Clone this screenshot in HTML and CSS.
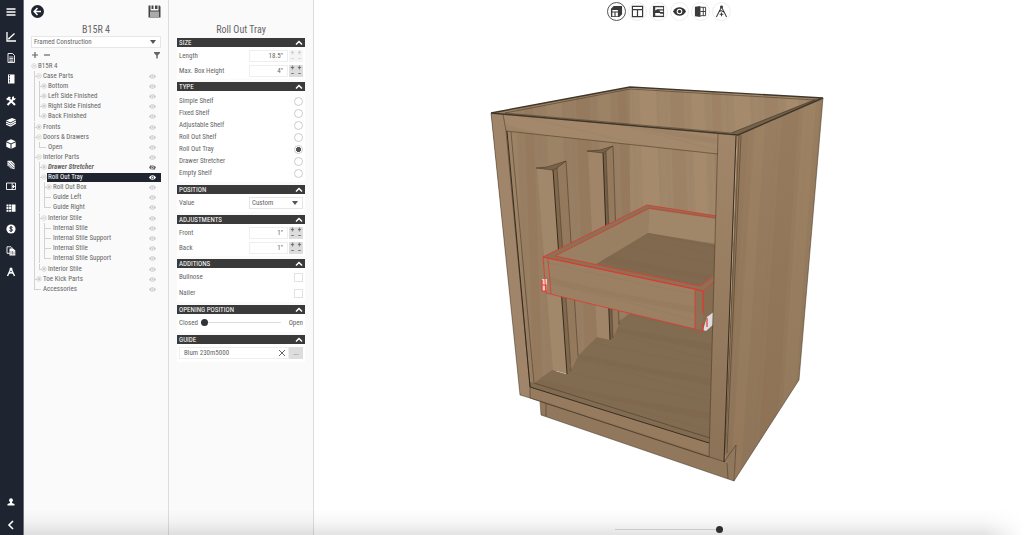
FILE: index.html
```html
<!DOCTYPE html>
<html lang="en">

<head>
  <meta charset="utf-8">
  <link rel="stylesheet" href="styles.css">
  <title>B15R 4 - Roll Out Tray</title>
</head>
<body>
  <!-- shared icons -->
  <svg class="defs" width="0" height="0" aria-hidden="true">
    <symbol id="eye" viewBox="0 0 16 10"><path fill="currentColor" fill-rule="evenodd" d="M8 0C4 0 1.300 2.500 0 5c1.300 2.500 4 5 8 5s6.700-2.500 8-5c-1.300-2.500-4-5-8-5zm0 1.500a3.500 3.500 0 1 1 0 7 3.500 3.500 0 0 1 0-7z"/><circle cx="8" cy="5" r="2.200" fill="currentColor"/></symbol>
    <symbol id="eye-off" viewBox="0 0 16 10"><use href="#eye"/><path d="M2 0l12 10" stroke="currentColor" stroke-width="1.800"/></symbol>
    <symbol id="plus" viewBox="0 0 7 7"><circle cx="3.500" cy="3.500" r="2.700" fill="#fafafa" stroke="#ccc" stroke-width=".8"/><path d="M2 3.500h3M3.500 2v3" stroke="#aaa" stroke-width=".8"/></symbol>
    <symbol id="minus" viewBox="0 0 7 7"><circle cx="3.500" cy="3.500" r="2.700" fill="#fafafa" stroke="#ccc" stroke-width=".8"/><path d="M2 3.500h3" stroke="#aaa" stroke-width=".8"/></symbol>
    <symbol id="up" viewBox="0 0 8 6"><path d="M1 4.500l3-3 3 3" fill="none" stroke="#fff" stroke-width="1.500"/></symbol>
  </svg>

  <div class="app">
    <nav class="sidebar">
      <button class="nav-button menu" aria-label="Menu"><svg viewBox="0 0 10 10"><path d="M.5 2h9M.5 5h9M.5 8h9" stroke="currentColor" stroke-width="1.300"/></svg></button>
      <div class="nav-list">
        <button class="nav-button" aria-label="Chart"><svg viewBox="0 0 10 10"><path d="M1 0v9h9M2.500 7L8.500 1.500" fill="none" stroke="currentColor" stroke-width="1.300"/><path d="M2.200 7.500l.6-2 1.400 1.400z" fill="currentColor"/></svg></button>
        <button class="nav-button" aria-label="Document"><svg viewBox="0 0 10 10"><path d="M2 .5h4.500L8.500 2.500v7H2z" fill="none" stroke="currentColor" stroke-width=".9"/><path d="M3.300 4h4M3.300 5.500h4M3.300 7h4M3.300 8.300h4" stroke="currentColor" stroke-width=".8"/></svg></button>
        <button class="nav-button" aria-label="Catalog"><svg viewBox="0 0 10 10"><path d="M2 .5h6.500v9H2z" fill="currentColor"/><path d="M3.500 1v8" stroke="#1f2530" stroke-dasharray="1 .6"/></svg></button>
        <button class="nav-button" aria-label="Tools"><svg viewBox="0 0 10 10"><path d="M1.500 9L8 2.500M2 2l7 7" stroke="currentColor" stroke-width="2"/><path d="M0 3l3-2.500 2 1-3 3zM6 1l2-.8v2l2 .1-1.500 2L6 3.500z" fill="currentColor"/></svg></button>
        <button class="nav-button" aria-label="Materials"><svg viewBox="0 0 10 10"><path d="M0 3.500l6-2.500 4 1.500-5.500 3z" fill="currentColor"/><path d="M0 5l4.500 2L10 4M0 7l4.500 2L10 6" fill="none" stroke="currentColor" stroke-width="1.200"/></svg></button>
        <button class="nav-button" aria-label="Products"><svg viewBox="0 0 10 10"><path d="M5 .3l4.700 2L5 4.500.3 2.300zM.3 3.200l4.200 2v4.500l-4.200-2zM9.700 3.200l-4.200 2v4.500l4.200-2z" fill="currentColor"/></svg></button>
        <button class="nav-button" aria-label="Parts"><svg viewBox="0 0 10 10"><path d="M1.500 .8h4l3 3v5.500l-4-1-3-3z" fill="currentColor"/><path d="M2 2.200l6 6M2 4.500l4 4M4.500 1.800l4 4" stroke="#1f2530" stroke-width=".7"/></svg></button>
        <button class="nav-button" aria-label="Layout"><svg viewBox="0 0 10 10"><path d="M.5 2h9v6.500h-9zM6.200 2v6.500M6.200 5.500h3" fill="none" stroke="currentColor" stroke-width=".9"/><path d="M7.500 4v3" stroke="currentColor"/></svg></button>
        <button class="nav-button" aria-label="Grid"><svg viewBox="0 0 10 10"><path d="M.5 1.500h2v2h-2zm2.600 0h2v2h-2zM.5 4.100h2v2h-2zm2.600 0h2v2h-2zM.5 6.700h2v2h-2zm2.600 0h2v2h-2zM5.700 1.500h3.800v7.200H5.700z" fill="currentColor"/></svg></button>
        <button class="nav-button" aria-label="Pricing"><svg viewBox="0 0 10 10"><circle cx="5" cy="5" r="4.600" fill="currentColor"/><path d="M6.600 3.500C5.500 2.500 3.500 3 3.700 4.100c.2 1 2.700.7 2.800 1.900 0 1.200-2 1.500-3.100.5M5 2v6" fill="none" stroke="#1f2530"/></svg></button>
        <button class="nav-button" aria-label="Reports"><svg viewBox="0 0 10 10"><path d="M1 .8h4l1 1v5.500H1z" fill="none" stroke="currentColor" stroke-width=".9"/><path d="M3.500 2.500H7l2.300 2v5H3.500z" fill="currentColor"/><path d="M5 5v3.500M6.500 5v3.500M8 5.500v3" stroke="#1f2530" stroke-width=".5"/></svg></button>
        <button class="nav-button" aria-label="Drafting"><svg viewBox="0 0 10 10"><path d="M5 1.500L1.500 9M5 1.500L8.500 9M2.500 6.500Q5 5 7.500 6.500" fill="none" stroke="currentColor" stroke-width="1.400"/><circle cx="5" cy="2" r="1.500" fill="currentColor"/></svg></button>
      </div>
      <div class="nav-bottom">
        <button class="nav-button" aria-label="Account"><svg viewBox="0 0 10 10"><circle cx="5" cy="3.200" r="1.900" fill="currentColor"/><path d="M4 4h2v2l2.500 1v1.500h-7V7L4 6z" fill="currentColor"/></svg></button>
        <button class="nav-button" aria-label="Collapse"><svg viewBox="0 0 10 10"><path d="M7 1L3 5l4 4" fill="none" stroke="currentColor" stroke-width="1.600"/></svg></button>
      </div>
    </nav>

    <section class="panel tree-panel">
      <div class="panel-bar">
        <button class="back" aria-label="Back"><svg viewBox="0 0 13 13"><circle cx="6.500" cy="6.500" r="6.500" fill="#1f2530"/><path d="M6.500 3L3.200 6.500l3.300 3.500M3.500 6.500H10" fill="none" stroke="#fff" stroke-width="1.500"/></svg></button>
        <button class="save" aria-label="Save"><svg viewBox="0 0 13 13"><path d="M.5.500h2v5h8v-5h1l1 1v11H.5z" fill="#444"/><path d="M3.500 .5h2V4h-2zM7 .5h2.500V4H7z" fill="#444"/><path d="M2 6.500h9v5.500H2z" fill="#aaa"/></svg></button>
      </div>
      <h1>B15R 4</h1>
      <select class="construction" aria-label="Construction"><option>Framed Construction</option></select>
      <div class="tree-tools">
        <button aria-label="Expand all"><svg viewBox="0 0 8 8"><path d="M4 1v6M1 4h6" stroke="#666" stroke-width="1.200"/></svg></button>
        <button aria-label="Collapse all"><svg viewBox="0 0 8 8"><path d="M1 4h6" stroke="#666" stroke-width="1.200"/></svg></button>
        <button class="filter" aria-label="Filter"><svg viewBox="0 0 8 8"><path d="M1 1h6v1L4.700 4.500v3H3.300v-3L1 2z" fill="#666"/></svg></button>
      </div>

      <div class="tree">
        <div class="row"><svg class="toggle"><use href="#minus"/></svg><div class="part"><span>B15R 4</span></div></div>
        <ul>
          <li>
            <div class="row"><svg class="toggle"><use href="#minus"/></svg><div class="part"><span>Case Parts</span><button aria-label="Toggle Case Parts"><svg><use href="#eye"/></svg></button></div></div>
            <ul class="leaves">
              <li><div class="row"><svg class="toggle"><use href="#plus"/></svg><div class="part"><span>Bottom</span><button aria-label="Toggle Bottom"><svg><use href="#eye"/></svg></button></div></div></li>
              <li><div class="row"><svg class="toggle"><use href="#plus"/></svg><div class="part"><span>Left Side Finished</span><button aria-label="Toggle Left Side"><svg><use href="#eye"/></svg></button></div></div></li>
              <li><div class="row"><svg class="toggle"><use href="#plus"/></svg><div class="part"><span>Right Side Finished</span><button aria-label="Toggle Right Side"><svg><use href="#eye"/></svg></button></div></div></li>
              <li><div class="row"><svg class="toggle"><use href="#plus"/></svg><div class="part"><span>Back Finished</span><button aria-label="Toggle Back"><svg><use href="#eye"/></svg></button></div></div></li>
            </ul>
          </li>
          <li><div class="row"><svg class="toggle"><use href="#plus"/></svg><div class="part"><span>Fronts</span><button aria-label="Toggle Fronts"><svg><use href="#eye"/></svg></button></div></div></li>
          <li>
            <div class="row"><svg class="toggle"><use href="#minus"/></svg><div class="part"><span>Doors &amp; Drawers</span><button aria-label="Toggle Doors and Drawers"><svg><use href="#eye"/></svg></button></div></div>
            <ul>
              <li class="leaf"><div class="row"><div class="part"><span>Open</span><button aria-label="Toggle Open"><svg><use href="#eye"/></svg></button></div></div></li>
            </ul>
          </li>
          <li>
            <div class="row"><svg class="toggle"><use href="#minus"/></svg><div class="part"><span>Interior Parts</span><button aria-label="Toggle Interior Parts"><svg><use href="#eye"/></svg></button></div></div>
            <ul>
              <li><div class="row"><svg class="toggle"><use href="#plus"/></svg><div class="part hidden-part"><span>Drawer Stretcher</span><button aria-label="Toggle Drawer Stretcher"><svg><use href="#eye-off"/></svg></button></div></div></li>
              <li>
                <div class="row"><svg class="toggle"><use href="#minus"/></svg><div class="part selected"><span>Roll Out Tray</span><button aria-label="Toggle Roll Out Tray"><svg><use href="#eye"/></svg></button></div></div>
                <ul class="leaves">
                  <li><div class="row"><svg class="toggle"><use href="#plus"/></svg><div class="part"><span>Roll Out Box</span><button aria-label="Toggle Roll Out Box"><svg><use href="#eye"/></svg></button></div></div></li>
                  <li class="leaf"><div class="row"><div class="part"><span>Guide Left</span><button aria-label="Toggle Guide Left"><svg><use href="#eye"/></svg></button></div></div></li>
                  <li class="leaf"><div class="row"><div class="part"><span>Guide Right</span><button aria-label="Toggle Guide Right"><svg><use href="#eye"/></svg></button></div></div></li>
                </ul>
              </li>
              <li>
                <div class="row"><svg class="toggle"><use href="#minus"/></svg><div class="part"><span>Interior Stile</span><button aria-label="Toggle Interior Stile"><svg><use href="#eye"/></svg></button></div></div>
                <ul class="leaves">
                  <li class="leaf"><div class="row"><div class="part"><span>Internal Stile</span><button aria-label="Toggle Internal Stile"><svg><use href="#eye"/></svg></button></div></div></li>
                  <li class="leaf"><div class="row"><div class="part"><span>Internal Stile Support</span><button aria-label="Toggle Internal Stile Support"><svg><use href="#eye"/></svg></button></div></div></li>
                  <li class="leaf"><div class="row"><div class="part"><span>Internal Stile</span><button aria-label="Toggle Internal Stile"><svg><use href="#eye"/></svg></button></div></div></li>
                  <li class="leaf"><div class="row"><div class="part"><span>Internal Stile Support</span><button aria-label="Toggle Internal Stile Support"><svg><use href="#eye"/></svg></button></div></div></li>
                </ul>
              </li>
              <li><div class="row"><svg class="toggle"><use href="#plus"/></svg><div class="part"><span>Interior Stile</span><button aria-label="Toggle Interior Stile"><svg><use href="#eye"/></svg></button></div></div></li>
            </ul>
          </li>
          <li><div class="row"><svg class="toggle"><use href="#plus"/></svg><div class="part"><span>Toe Kick Parts</span><button aria-label="Toggle Toe Kick Parts"><svg><use href="#eye"/></svg></button></div></div></li>
          <li class="leaf"><div class="row"><div class="part"><span>Accessories</span><button aria-label="Toggle Accessories"><svg><use href="#eye"/></svg></button></div></div></li>
        </ul>
      </div>
    </section>

    <section class="panel props-panel">
      <h2>Roll Out Tray</h2>

      <div class="group">
        <button class="group-header">SIZE<svg><use href="#up"/></svg></button>
        <div class="group-body">
          <div class="field">
            <label for="length">Length</label>
            <input type="text" id="length" value='18.5"'>
            <div class="steps off"><button disabled>+</button><button disabled>+</button><button disabled>−</button><button disabled>−</button></div>
          </div>
          <div class="field">
            <label for="box_height">Max. Box Height</label>
            <input type="text" id="box_height" value='4"'>
            <div class="steps"><button>+</button><button>+</button><button>−</button><button>−</button></div>
          </div>
        </div>
      </div>

      <div class="group">
        <button class="group-header">TYPE<svg><use href="#up"/></svg></button>
        <div class="group-body types">
          <label>Simple Shelf<input type="radio" name="type"></label>
          <label>Fixed Shelf<input type="radio" name="type"></label>
          <label>Adjustable Shelf<input type="radio" name="type"></label>
          <label>Roll Out Shelf<input type="radio" name="type"></label>
          <label>Roll Out Tray<input type="radio" name="type" checked></label>
          <label>Drawer Stretcher<input type="radio" name="type"></label>
          <label>Empty Shelf<input type="radio" name="type"></label>
        </div>
      </div>

      <div class="group">
        <button class="group-header">POSITION<svg><use href="#up"/></svg></button>
        <div class="group-body single">
          <div class="field">
            <label for="position">Value</label>
            <select id="position"><option>Custom</option></select>
          </div>
        </div>
      </div>

      <div class="group">
        <button class="group-header">ADJUSTMENTS<svg><use href="#up"/></svg></button>
        <div class="group-body">
          <div class="field">
            <label for="adjust_front">Front</label>
            <input type="text" id="adjust_front" value='1"'>
            <div class="steps"><button>+</button><button>+</button><button>−</button><button>−</button></div>
          </div>
          <div class="field">
            <label for="adjust_back">Back</label>
            <input type="text" id="adjust_back" value='1"'>
            <div class="steps"><button>+</button><button>+</button><button>−</button><button>−</button></div>
          </div>
        </div>
      </div>

      <div class="group">
        <button class="group-header">ADDITIONS<svg><use href="#up"/></svg></button>
        <div class="group-body checks">
          <label>Bullnose<input type="checkbox"></label>
          <label>Nailer<input type="checkbox"></label>
        </div>
      </div>

      <div class="group">
        <button class="group-header">OPENING POSITION<svg><use href="#up"/></svg></button>
        <div class="group-body single">
          <div class="field opening">
            <label for="opening">Closed</label>
            <input type="range" id="opening" min="0" max="100" value="0">
            <span>Open</span>
          </div>
        </div>
      </div>

      <div class="group">
        <button class="group-header">GUIDE<svg><use href="#up"/></svg></button>
        <div class="group-body single">
          <div class="field guide">
            <input type="text" aria-label="Guide" value="Blum 230m5000">
            <button class="clear" aria-label="Clear guide"><svg viewBox="0 0 8 8"><path d="M1 1l6 6M7 1L1 7" stroke="#555" stroke-width=".9"/></svg></button>
            <button class="browse">...</button>
          </div>
        </div>
      </div>
    </section>

    <main class="view">
      <div class="view-tools">
        <button class="active" aria-label="3D view"><svg viewBox="0 0 14 14"><path d="M1 4l3-3h9v9l-3 3H1z" fill="#3a3a3a"/><path d="M2.500 5.500h6v1.500h-6zM2.500 8h2.300v4H2.500zM6 8h2.500v4H6z" fill="#fff"/></svg></button>
        <button aria-label="Front view"><svg viewBox="0 0 14 14"><path d="M1.500 1.500h11v11h-11zM1.500 5h11M7 5v7.500" fill="none" stroke="#3a3a3a" stroke-width="1.300"/></svg></button>
        <button aria-label="Section view"><svg viewBox="0 0 14 14"><path d="M1 1h12v12H1z" fill="#3a3a3a"/><path d="M3.500 2.500H12v2H5.500L3.500 6zM3.500 8.500H8l1 1h3v2H3.500zM8 6h4v1.500H9z" fill="#fff"/></svg></button>
        <button aria-label="Visibility"><svg viewBox="0 0 14 14"><path d="M0 7c3-6 11-6 14 0-3 6-11 6-14 0z" fill="#333"/><circle cx="7" cy="7" r="3" fill="#fff"/><circle cx="7" cy="7" r="1.800" fill="#333"/></svg></button>
        <button aria-label="Open doors"><svg viewBox="0 0 14 14"><path d="M1 2l6-1v12l-6-1z" fill="#3a3a3a"/><path d="M7 2.500h5.500v9H7M7 7h5.500M10 2.500v9" fill="none" stroke="#3a3a3a"/></svg></button>
        <button aria-label="Measure"><svg viewBox="0 0 14 14"><path d="M7 2L1.500 13M7 2l5.500 11M3.500 8l3-2 4 2M7 8v4M5 10h4" fill="none" stroke="#3a3a3a" stroke-width="1.100"/><circle cx="7" cy="2.200" r="1.600" fill="#3a3a3a"/></svg></button>
      </div>

      <svg class="cabinet" viewBox="314 24 710 494" role="img" aria-label="Base cabinet with roll out tray">
        <defs>
          <pattern id="grain" width="94" height="500" patternUnits="userSpaceOnUse" patternTransform="rotate(-2)">
            <path d="M8 0h14v500H8zM50 0h9v500h-9z" fill="#6d4f2f" opacity=".08"/>
            <path d="M30 0h12v500H30zM72 0h16v500H72z" fill="#d8b68a" opacity=".09"/>
            <path d="M4 0v500M26 0v500M46 0v500M65 0v500M90 0v500" stroke="#5d452b" opacity=".07"/>
          </pattern>
          <pattern id="side-grain" width="78" height="500" patternUnits="userSpaceOnUse" patternTransform="rotate(4)">
            <path d="M8 0h17v500H8zM45 0h9v500h-9z" fill="#5d452b" opacity=".05"/>
            <path d="M29 0h12v500H29zM60 0h10v500H60z" fill="#d8b68a" opacity=".06"/>
            <path d="M4 0v500M34 0v500M57 0v500" stroke="#5d452b" opacity=".07"/>
          </pattern>
          <pattern id="cross-grain" width="500" height="34" patternUnits="userSpaceOnUse" patternTransform="rotate(13)">
            <path d="M0 6q125 9 250 0t250 0v7q-125-6-250 0t-250 0z" fill="#5d452b" opacity=".07"/>
            <path d="M0 20q125-7 250 0t250 0M0 28q125 6 250 0t250 0" fill="none" stroke="#5d452b" opacity=".08"/>
          </pattern>
          <linearGradient id="side-shade" x1="0" y1="0" x2="0" y2="1"><stop offset="0" stop-color="#997e61"/><stop offset="1" stop-color="#8e7458"/></linearGradient>
          <linearGradient id="stile-shade" x1="0" y1="0" x2="0" y2="1"><stop offset="0" stop-color="#a1866a"/><stop offset="1" stop-color="#8c7256"/></linearGradient>
        </defs>

        <!-- inside walls and floor -->
        <path d="M491 113L630 87 632 330 534 383 520 390z" fill="#987e62"/>
        <path d="M630 87L823 98 739 135 717 250V350H630z" fill="#a1876a"/>
        <path d="M491 113L630 87 823 98 739 135 717 350H632L534 383z" fill="url(#grain)"/>
        <path d="M526 380l8 3 18-13 14 4 12-18 19-19 14 3 7-18 14-10h86v145l-192-63z" fill="#816b51"/>
        <path d="M526 380l8 3 18-13 14 4 12-18 19-19 14 3 7-18 14-10h86v145l-192-63z" fill="url(#cross-grain)"/>

        <!-- interior stiles -->
        <path d="M537 168l16 2 14 204-14-4z" fill="#a2886b"/>
        <path d="M553 170l4-2 14 203-4 3z" fill="#80684d"/>
        <path d="M557 168l9-7 12 195-7 15z" fill="#94795d"/>
        <path d="M536 168l11-1 19-6-9 7-4 2z" fill="#796248"/>
        <path d="M588 152l15 1 7 187-13-3z" fill="#a08569"/>
        <path d="M603 153l3-2 7 187-3 2z" fill="#766047"/>
        <path d="M606 151l7-5 6 179-6 13z" fill="#94795d"/>
        <path d="M587 151l13-1 13-4-7 5-3 2z" fill="#796248"/>
        <g class="edge">
          <path d="M536 168l17 2 4-2 9-7-19 6z"/>
          <path d="M557 168l14 203M566 161l12 195M587 151l16 2 3-2 7-5-13 4zM606 151l7 187M613 146l6 179M511 132l23 251"/>
          <path class="strong" d="M553 170l14 204M603 153l7 187"/>
        </g>

        <!-- tray -->
        <path d="M543 257L647 205l70 11v64l-14 11z" fill="#8c7156"/>
        <path d="M555 256L649 208 648 233 597 265z" fill="#9a8063"/>
        <path d="M649 208l68 10v26l-69-11z" fill="#a1876a"/>
        <path d="M648 233l68 12v30l-16 11-104-22z" fill="#80694f"/>
        <path d="M648 233l68 12v30l-16 11-104-22z" fill="url(#cross-grain)"/>
        <path d="M543 257L647 205l70 11v3l-68-10-94 47 145 30 14-11v6l-11 10z" fill="#8c7156"/>
        <path d="M543 257l160 34v40l-157-38z" fill="#9b8063"/>
        <path d="M543 257l160 34v40l-157-38z" fill="url(#cross-grain)"/>
        <path d="M695 289l8 2v40l-8-3z" fill="#8c7156"/>
        <path d="M703 291l12-11v32l-12 19z" fill="#866d52"/>
        <path d="M703 330l4-13 8-6v12l-9 8z" fill="#dedede"/>
        <path d="M542 279h5v12h-5z" fill="#f4c8c8"/>
        <g class="highlight">
          <path d="M543 257L647 205l70 11M555 256l94-48 68 10M543 257l160 34 12-10M555 256l145 30 15-10M543 257l3 36 157 38M548 259l3 35M695 290v39"/>
          <path class="strong" d="M543 257l152 32 8 2v22M542 280v11h4v-6h-4M703 323v8M707 318v9"/>
        </g>

        <!-- face frame -->
        <path d="M491 113l14 1 25 273v11l-10-3z" fill="#a0856a"/>
        <path d="M503 114l235 22-20 18-212-23z" fill="#a3886b"/>
        <path d="M503 114l235 22-20 18-212-23z" fill="url(#cross-grain)"/>
        <path d="M530 387l180 56v14l-180-59z" fill="#967b5f"/>
        <path d="M540 400l185 60 12-17-3 38-193-66z" fill="#91775b"/>
        <path d="M718 134l19 2-12 326-16-5z" fill="url(#stile-shade)"/>
        <path d="M737 136l4-2 82-36-24 282-65 101 2-36-11 17z" fill="url(#side-shade)"/>
        <path d="M737 136l4-2 82-36-24 282-65 101 2-36-11 17z" fill="url(#side-grain)"/>
        <path d="M737 136l86-38-8 1-84 34z" fill="#75624a"/>
        <g class="edge">
          <path d="M503 114l3 17 212 23M718 134l-9 323M506 131l24 255M534 383l176 55M530 398l179 59M540 402l1 13 193 66M546 404v12M741 135l-14 318M739 135L725 455M823 98l-24 282-65 101M727 463l1 16M724 462l12-17-2 36M491 113l29 282 10 3 195 64M530 386v12"/>
          <path class="strong" d="M507 131l23 256 179 56M736 136l-12 326"/>
          <path class="rim" d="M491 113L630 87l193 11-85 37-247-22"/>
          <path d="M505 113L630 89l185 11-84 33z"/>
        </g>
      </svg>

      <input class="zoom" type="range" min="0" max="100" value="100" aria-label="Zoom">
    </main>
    <div class="fade"></div>
  </div>
</body>

</html>
```

FILE: styles.css
```css
* {
  box-sizing: border-box;
}

body {
  margin: 0;
  font-family: "Roboto Condensed", "Liberation Sans Narrow", Roboto, sans-serif;
  font-size: 7px;
  line-height: 10px;
  color: #666;
  background-color: #fff;
}

button, input, select {
  font: inherit;
  color: inherit;
  margin: 0;
  padding: 0;
  border: none;
  background: none;
}

button {
  cursor: pointer;
}

svg {
  display: block;
}

.defs {
  position: absolute;
}

.app {
  position: relative;
  display: flex;
  min-height: 100vh;
}

/* Sidebar */
.sidebar {
  flex: 0 0 24px;
  display: flex;
  flex-direction: column;
  align-items: center;
  padding-right: 2px;
  color: #fff;
  background-color: #1f2530;
  border-right: 1px solid #697080;
}

.nav-button {
  display: grid;
  place-items: center;
  width: 21px;
  height: 21px;
}

.nav-button svg {
  width: 10px;
  height: 10px;
}

.menu {
  margin: 1px 0 4px;
}

.nav-list {
  display: flex;
  flex-direction: column;
  justify-content: space-between;
  height: 48vh;
}

.nav-bottom {
  margin-top: auto;
  display: grid;
  gap: 2px;
}

/* Panels */
.panel {
  flex: 0 0 145px;
  min-width: 0;
  padding: 5px 7px 0;
  background-color: #fafafa;
  border-right: 1px solid #ddd;
}

.props-panel {
  padding: 5px 8px 0;
}

h1, h2 {
  margin: 0;
  font-size: 10px;
  line-height: 12px;
  font-weight: normal;
  text-align: center;
}

h1 {
  margin-top: 6px;
}

h2 {
  margin: 19px 0 2px;
}

.panel-bar {
  display: flex;
  justify-content: space-between;
}

.panel-bar svg {
  width: 13px;
  height: 13px;
}

select {
  appearance: none;
  height: 12px;
  padding: 0 2px;
  border: 1px solid #e6e6e6;
  background: #fff url("data:image/svg+xml,%3Csvg xmlns='http://www.w3.org/2000/svg' viewBox='0 0 6 4'%3E%3Cpath d='M0 0h6L3 4z' fill='%23555'/%3E%3C/svg%3E") no-repeat right 4px center / 6px 4px;
}

.construction {
  width: 100%;
}

.tree-tools {
  display: flex;
  gap: 4px;
  padding: 3px 0 2px;
}

.tree-tools svg {
  width: 8px;
  height: 8px;
}

.filter {
  margin-left: auto;
}

/* Tree, the lines are drawn behind the rows */
.tree ul {
  list-style: none;
  margin: 0 0 0 3px;
  padding: 0;
}

.tree .leaves {
  margin-bottom: 1px;
}

.tree li {
  padding-left: 2px;
  background:
    linear-gradient(#d2d2d2, #d2d2d2) 0 0 / 1px 100% no-repeat,
    linear-gradient(#d2d2d2, #d2d2d2) 0 5px / 4px 1px no-repeat;
}

.tree li:last-child {
  background-size: 1px 5px, 4px 1px;
}

.tree li.leaf {
  padding-left: 8px;
  background-size: 1px 100%, 7px 1px;
}

.tree li.leaf:last-child {
  background-size: 1px 5px, 7px 1px;
}

.row {
  display: flex;
  align-items: center;
  height: 10px;
}

.toggle {
  flex: none;
  width: 6px;
  height: 6px;
}

.part {
  flex: 1;
  display: flex;
  align-items: center;
  justify-content: space-between;
  height: 9px;
  padding: 0 5px 0 1px;
  line-height: 9px;
  white-space: nowrap;
}

.part svg {
  width: 7px;
  height: 5px;
  color: #ccc;
}

.hidden-part {
  font-weight: bold;
  font-style: italic;
}

.part.hidden-part svg {
  color: #666;
}

.selected {
  color: #fff;
  background-color: #1f2530;
}

.part.selected svg {
  color: #fff;
}

/* Properties */
.group {
  margin-bottom: 3px;
  background-color: #fff;
}

.group-header {
  display: flex;
  align-items: center;
  justify-content: space-between;
  width: 100%;
  height: 9px;
  padding: 1px 2px 0;
  line-height: 8px;
  color: #fff;
  background-color: #3a3a3a;
}

.group-header svg {
  width: 8px;
  height: 6px;
}

.group-body {
  padding: 1px 2px;
}

.single {
  padding: 1px 2px 2px;
}

.field {
  display: flex;
  align-items: center;
  gap: 1px;
  height: 15px;
}

.field label {
  flex: 1;
}

.field input[type="text"] {
  width: 39px;
  height: 12px;
  padding-right: 4px;
  text-align: right;
  border: 1px solid #eee;
}

.steps {
  display: grid;
  grid-template-columns: 7px 7px;
  grid-auto-rows: 6px;
  width: 14px;
  font-weight: bold;
  background-color: #ddd;
}

.steps button {
  line-height: 6px;
}

.steps.off {
  color: #ccc;
  background-color: #f5f5f5;
}

#position {
  width: 54px;
}

.types {
  padding: 4px 2px 3px;
}

.types label, .checks label {
  display: flex;
  align-items: center;
  justify-content: space-between;
  height: 12px;
}

.checks label {
  height: 16px;
}

input[type="radio"], input[type="checkbox"] {
  appearance: none;
  width: 9px;
  height: 9px;
  border: 1px solid #ccc;
  background-color: #fff;
}

input[type="radio"] {
  border-radius: 50%;
}

input[type="radio"]:checked {
  background: radial-gradient(#555 45%, #fff 55%);
}

input[type="checkbox"] {
  border-color: #e2e2e2;
}

.field.opening label {
  flex: none;
}

.opening {
  gap: 3px;
}

input[type="range"] {
  appearance: none;
  height: 7px;
  background: linear-gradient(#ddd, #ddd) center / 100% 1px no-repeat;
}

input[type="range"]::-webkit-slider-thumb {
  appearance: none;
  width: 7px;
  height: 7px;
  border-radius: 50%;
  background-color: #333;
}

.opening input {
  flex: 1;
  min-width: 0;
  margin-right: 5px;
}

.guide {
  gap: 0;
}

.field.guide input {
  flex: 1;
  min-width: 0;
  padding-left: 4px;
  text-align: left;
  border-right: none;
}

.clear {
  display: grid;
  place-items: center;
  width: 14px;
  height: 12px;
  border: 1px solid #eee;
  border-left: none;
}

.clear svg {
  width: 8px;
  height: 8px;
}

.browse {
  width: 14px;
  height: 12px;
  background-color: #ddd;
}

/* 3D view */
.view {
  flex: 1;
  min-width: 0;
  display: flex;
  flex-direction: column;
  align-items: center;
}

.view-tools {
  display: flex;
  gap: 2px;
  padding: 2px 0 3px;
}

.view-tools button {
  display: grid;
  place-items: center;
  width: 19px;
  height: 19px;
  border: 1px solid #eee;
  border-radius: 50%;
}

.view-tools .active {
  border-color: #555;
}

.view-tools svg {
  width: 13px;
  height: 13px;
}

.cabinet {
  width: 100%;
}

.edge, .highlight {
  fill: none;
  stroke: #3f3222;
  stroke-width: 0.5;
}

.edge .strong {
  stroke: #2e2418;
  stroke-width: 0.9;
}

.edge .rim {
  stroke: #40372b;
  stroke-width: 1.4;
}

.highlight {
  stroke: #e0392f;
  stroke-width: 0.8;
}

.highlight .strong {
  stroke-width: 1.2;
}

.zoom {
  width: 108px;
  margin: auto 0 2px;
}

.fade {
  position: absolute;
  left: 24px;
  right: 0;
  bottom: 0;
  height: 26px;
  pointer-events: none;
  background: linear-gradient(transparent, rgba(0, 0, 0, 0.03) 50%, rgba(0, 0, 0, 0.11));
  mask-image: linear-gradient(to right, #000 96%, transparent);
}
```
